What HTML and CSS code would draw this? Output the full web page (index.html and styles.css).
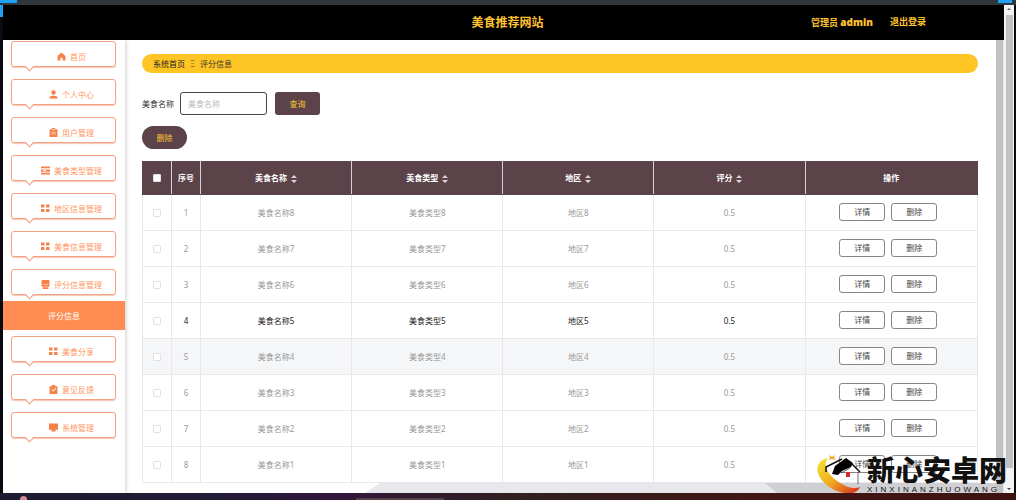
FILE: index.html
```html
<!DOCTYPE html>
<html lang="zh-CN">
<head>
<meta charset="utf-8">
<title>美食推荐网站</title>
<link rel="stylesheet" href="styles.css">
</head>
<body>
<svg class="defs" aria-hidden="true">
  <symbol id="home" viewBox="0 0 16 16"><path d="M8 1 1 7v8h5v-5h4v5h5V7z"/></symbol>
  <symbol id="user" viewBox="0 0 16 16"><circle cx="8" cy="4.500" r="4"/><path d="M1 15v-3l5-2h4l5 2v3z"/></symbol>
  <symbol id="clip" viewBox="0 0 16 16"><path fill-rule="evenodd" d="M1 2h4V0h6v2h4v14H1zM6 2v2h4V2zM4 7v1h8V7zM4 10v1h8v-1z"/></symbol>
  <symbol id="list" viewBox="0 0 16 16"><path fill-rule="evenodd" d="M0 1h16v3H0zM0 6h16v4H0zM0 12h16v3H0zM4 7v2h5V7z"/></symbol>
  <symbol id="grid" viewBox="0 0 16 16"><path d="M0 1h6v5H0zM9 1h6v5H9zM0 9h6v5H0zM9 9h6v5H9z"/></symbol>
  <symbol id="chat" viewBox="0 0 16 16"><path fill-rule="evenodd" d="M2 0h12l1 1v10l-1 1H2l-1-1V1zM3 8v1h10V8zM3 13h10v3H3z"/></symbol>
  <symbol id="check" viewBox="0 0 16 16"><path fill-rule="evenodd" d="M1 2h4V0h6v2h4v14H1zM4 8l3 4 6-6-1-1-5 5-2-3z"/></symbol>
  <symbol id="screen" viewBox="0 0 16 16"><path d="M0 1h16v11h-5l1 3H4l1-3H0z"/></symbol>
  <symbol id="sort" viewBox="0 0 6 8"><path d="M3 0 6 3H0zM3 8 0 5h6z"/></symbol>
</svg>
<div class="strip"></div>
<div class="window">
  <div class="page">
    <header class="top">
      <span></span>
      <h1>美食推荐网站</h1>
      <div class="account"><span>管理员 <b>admin</b></span><a href="#">退出登录</a></div>
    </header>
    <div class="body">
      <nav class="side">
        <a class="item" href="#"><svg><use href="#home"/></svg>首页</a>
        <a class="item" href="#"><svg><use href="#user"/></svg>个人中心</a>
        <a class="item" href="#"><svg><use href="#clip"/></svg>用户管理</a>
        <a class="item" href="#"><svg><use href="#list"/></svg>美食类型管理</a>
        <a class="item" href="#"><svg><use href="#grid"/></svg>地区信息管理</a>
        <a class="item" href="#"><svg><use href="#grid"/></svg>美食信息管理</a>
        <a class="item" href="#"><svg><use href="#chat"/></svg>评分信息管理</a>
        <a class="current" href="#">评分信息</a>
        <a class="item" href="#"><svg><use href="#grid"/></svg>美食分享</a>
        <a class="item" href="#"><svg><use href="#check"/></svg>意见反馈</a>
        <a class="item" href="#"><svg><use href="#screen"/></svg>系统管理</a>
      </nav>
      <main class="main">
        <div class="content">
          <div class="crumbs"><a href="#">系统首页</a><span class="sep">Ξ</span><span>评分信息</span></div>
          <form class="search">
            <label for="name">美食名称</label>
            <input id="name" class="field" type="text" placeholder="美食名称">
            <button class="btn" type="button">查询</button>
          </form>
          <button class="btn pill" type="button">删除</button>
          <table class="grid">
            <colgroup><col class="c-small"><col class="c-small"><col class="c-data"><col class="c-data"><col class="c-data"><col class="c-data"><col></colgroup>
            <thead><tr>
              <th><input type="checkbox" aria-label="全选"></th><th>序号</th>
              <th>美食名称<svg class="sort"><use href="#sort"/></svg></th>
              <th>美食类型<svg class="sort"><use href="#sort"/></svg></th>
              <th>地区<svg class="sort"><use href="#sort"/></svg></th>
              <th>评分<svg class="sort"><use href="#sort"/></svg></th><th>操作</th>
            </tr></thead>
            <tbody>
              <tr><td><input type="checkbox" aria-label="选择 1"></td><td>1</td><td>美食名称8</td><td>美食类型8</td><td>地区8</td><td>0.5</td><td><div class="ops"><button type="button">详情</button><button type="button">删除</button></div></td></tr>
              <tr><td><input type="checkbox" aria-label="选择 2"></td><td>2</td><td>美食名称7</td><td>美食类型7</td><td>地区7</td><td>0.5</td><td><div class="ops"><button type="button">详情</button><button type="button">删除</button></div></td></tr>
              <tr><td><input type="checkbox" aria-label="选择 3"></td><td>3</td><td>美食名称6</td><td>美食类型6</td><td>地区6</td><td>0.5</td><td><div class="ops"><button type="button">详情</button><button type="button">删除</button></div></td></tr>
              <tr class="strong"><td><input type="checkbox" aria-label="选择 4"></td><td>4</td><td>美食名称5</td><td>美食类型5</td><td>地区5</td><td>0.5</td><td><div class="ops"><button type="button">详情</button><button type="button">删除</button></div></td></tr>
              <tr class="hover"><td><input type="checkbox" aria-label="选择 5"></td><td>5</td><td>美食名称4</td><td>美食类型4</td><td>地区4</td><td>0.5</td><td><div class="ops"><button type="button">详情</button><button type="button">删除</button></div></td></tr>
              <tr><td><input type="checkbox" aria-label="选择 6"></td><td>6</td><td>美食名称3</td><td>美食类型3</td><td>地区3</td><td>0.5</td><td><div class="ops"><button type="button">详情</button><button type="button">删除</button></div></td></tr>
              <tr><td><input type="checkbox" aria-label="选择 7"></td><td>7</td><td>美食名称2</td><td>美食类型2</td><td>地区2</td><td>0.5</td><td><div class="ops"><button type="button">详情</button><button type="button">删除</button></div></td></tr>
              <tr><td><input type="checkbox" aria-label="选择 8"></td><td>8</td><td>美食名称1</td><td>美食类型1</td><td>地区1</td><td>0.5</td><td><div class="ops"><button type="button">详情</button><button type="button">删除</button></div></td></tr>
            </tbody>
          </table>
        </div>
        <svg class="ground" viewBox="0 0 871 10" preserveAspectRatio="none" aria-hidden="true"><path fill="#e8e8ec" d="M255 0h385l14 10H240z"/><path fill="#d0d0d4" d="M640 0h231v10H652z"/></svg>
      </main>
      <div class="inner-bar"></div>
    </div>
  </div>
  <div class="outer-bar"><span class="arrow up"></span><span class="thumb"></span><span class="arrow down"></span></div>
</div>
<div class="taskbar"><i class="dot"></i><i class="tab"></i></div>
<div class="brand">
  <svg viewBox="0 0 46 40" aria-hidden="true">
    <defs><linearGradient id="swoosh" x1="0" y1="0" x2="1" y2="1"><stop offset="0" stop-color="#f4e431"/><stop offset=".5" stop-color="#f0ad22"/><stop offset="1" stop-color="#d9271c"/></linearGradient></defs>
    <path fill="url(#swoosh)" d="M11 4C2 6-1 12 1 19c4 12 19 21 32 20 5 0 8-2 10-6-5 2-12 1-18-3C14 24 4 13 11 4z"/>
    <path fill="#eda821" d="M12 1l3 2 3-2-1 3 2 2-4-1-3 1 1-2z"/>
    <path fill="none" stroke="#111" stroke-width="1.500" d="M9 18v-5L25 5"/>
    <path d="M15 20 18 12 29 4l7 5-2 4-9 4-4 4z"/>
    <path fill="none" stroke="#111" stroke-width="1.500" d="M34 9l9 9"/>
    <path fill="none" stroke="#333" stroke-width=".7" d="M41 18v12M24 19l9-5"/>
    <path fill="#d92830" d="M29 18h4v5h-4z"/>
  </svg>
  <div class="words"><strong>新心安卓网</strong><small>XINXINANZHUOWANG</small></div>
</div>
</body>
</html>
```

FILE: styles.css
```css
* { box-sizing: border-box; }
body {
  position: relative;
  margin: 0;
  min-height: 100vh;
  display: flex;
  flex-direction: column;
  background: #0b0a12;
  color: #333;
  font: 8px/12px "Noto Sans", "Noto Sans CJK SC", sans-serif;
}
a { color: inherit; text-decoration: none; }
button, input { font: inherit; margin: 0; }
.defs { position: absolute; width: 0; height: 0; }

.strip {
  height: 5px;
  background:
    linear-gradient(#1ea0f5, #1ea0f5) 0 0 / 17px 3px no-repeat,
    linear-gradient(#1ea0f5, #1ea0f5) calc(100% - 4px) 0 / 14px 3px no-repeat,
    #30373d;
}
.window { flex: 1; display: flex; padding: 0 2px 0 3px; background: linear-gradient(#1ea0f5, #1ea0f5) 0 0 / 3px 12px no-repeat; }
.page { flex: 1; min-width: 0; display: flex; flex-direction: column; background: #fff; }

.top {
  height: 35px;
  display: grid;
  grid-template-columns: 1fr auto 1fr;
  align-items: center;
  padding-left: 8px;
  background: #000;
  color: #ffc331;
  font-weight: 700;
}
.top h1 { margin: 0; font-size: 12px; line-height: 16px; }
.account { display: flex; justify-content: flex-end; gap: 17px; padding-right: 78px; font-size: 9px; }
.account b { font-size: 10px; }

.body { flex: 1; display: flex; }
.side {
  width: 122px;
  display: flex;
  flex-direction: column;
  gap: 12px;
  padding-top: 1px;
  box-shadow: 1px 0 4px #0003;
  color: #ff9560;
}
.item {
  position: relative;
  height: 26px;
  margin: 0 9px 0 8px;
  padding: 5px 0 0 16px;
  display: flex;
  align-items: center;
  justify-content: center;
  gap: 4px;
  border: 1px solid #f3a283;
  border-radius: 3px;
  box-shadow: 0 1px 1px #f3a28399;
}
.item::after {
  content: "";
  position: absolute;
  left: 14px;
  bottom: -4px;
  width: 6px;
  height: 6px;
  border: solid #f3a283;
  border-width: 0 1px 1px 0;
  background: linear-gradient(135deg, transparent 40%, #fff 40%);
  transform: rotate(45deg);
}
.item svg { width: 9px; height: 9px; fill: #f58048; }
.current {
  position: relative;
  height: 29px;
  margin: -6px 0;
  display: flex;
  align-items: center;
  justify-content: center;
  background: #ff8c52;
  color: #fff;
}

.main { flex: 1; min-width: 0; display: flex; flex-direction: column; }
.content { flex: 1; padding: 14px 18px 0 17px; }
.crumbs {
  height: 19px;
  display: flex;
  align-items: center;
  padding: 0 11px;
  gap: 5px;
  border-radius: 10px;
  background: #ffc524;
}
.crumbs a { color: #222; }
.crumbs .sep { color: #8b6a20; }
.search { display: flex; align-items: center; margin: 19px 0 11px; }
.field {
  width: 87px;
  height: 23px;
  margin: 0 8px 0 6px;
  padding: 0 7px;
  border: 1px solid #4b4348;
  border-radius: 3px;
  background: #fff;
}
.field::placeholder { color: #bbb; }
.btn {
  display: block;
  width: 45px;
  height: 23px;
  padding: 0;
  border: 0;
  border-radius: 3px;
  background: #5b4349;
  color: #ffc331;
}
.pill { border-radius: 12px; margin-bottom: 12px; }

.grid { width: 100%; table-layout: fixed; border-collapse: collapse; text-align: center; }
.c-small { width: 29px; }
.c-data { width: 18.1%; }
.grid th, .grid td { padding: 0; border: 1px solid #e8e8ea; }
.grid th { height: 33px; border-color: #5b4349; border-right-color: #d8d0d2; background: #5b4349; color: #fff; }
.grid th:last-child { border-right-color: #5b4349; }
.grid td { height: 36px; color: #999; }
.grid .strong td { color: #222; }
.grid .hover td { background: #f5f6f8; }
.grid input {
  appearance: none;
  display: block;
  width: 8px;
  height: 8px;
  margin: 0 auto;
  border: 1px solid #e2e2e4;
  border-radius: 1px;
  background: #fff;
}
.sort { width: 6px; height: 8px; margin-left: 4px; vertical-align: middle; fill: #ddd3d6; }
.ops { display: flex; justify-content: center; gap: 6px; padding: 0 6px 2px 0; }
.ops button {
  width: 46px;
  height: 18px;
  padding: 0;
  border: 1px solid #8b8387;
  border-radius: 3px;
  background: #fff;
  color: #444;
}
.ground { display: block; width: 100%; height: 10px; }

.inner-bar { width: 8px; background: #c1c1c1; border-right: 1px solid #e8e8e8; }
.outer-bar {
  width: 10px;
  display: flex;
  flex-direction: column;
  align-items: center;
  background: #f3f3f3;
}
.thumb { flex: 1; width: 7px; margin: 5px 0 20px; background: #c1c1c1; }
.arrow { border: 2px solid transparent; }
.up { border-bottom-color: #666; margin-top: 1px; }
.down { border-top-color: #444; margin-bottom: 1px; }

.taskbar {
  height: 7px;
  display: flex;
  align-items: flex-end;
  padding-left: 20px;
  background: linear-gradient(90deg, #1c1b2f, #1d1c35 18%, #32163b 33%, #30201d 52%, #421516 75%, #3d1212);
}
.dot { width: 7px; height: 4px; border-radius: 4px 4px 0 0; background: #d58a95; }
.tab { width: 88px; height: 2px; margin-left: 33%; background: #54414a; }

.brand {
  position: absolute;
  right: 9px;
  bottom: 5px;
  display: flex;
  align-items: center;
  gap: 4px;
  color: #111;
}
.brand svg { width: 46px; height: 40px; }
.words { display: flex; flex-direction: column; }
.words strong { font: 900 28px/32px "Noto Sans CJK SC", sans-serif; }
.words small { font: 8px/10px "Liberation Sans", sans-serif; letter-spacing: 3px; }
```
